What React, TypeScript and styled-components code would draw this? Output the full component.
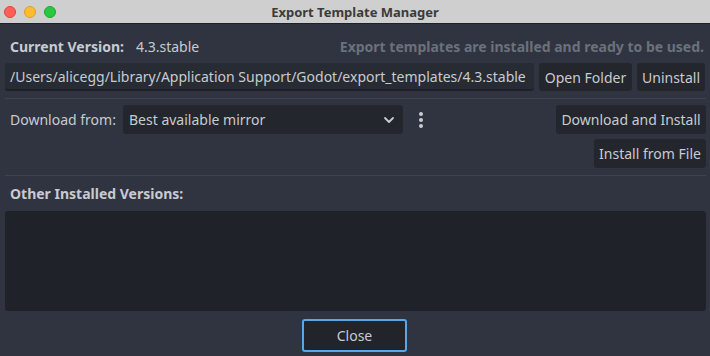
import React from "react";
import styled, { createGlobalStyle } from "styled-components";

const Global = createGlobalStyle`
  html, body { margin: 0; padding: 0; background: #2f3440; }
  body { font-family: "Noto Sans", "Open Sans", sans-serif; font-size: 14px; color: #c8cbd1; }
  * { box-sizing: border-box; }
`;

const Window = styled.div`
  width: 710px;
  height: 356px;
  display: flex;
  flex-direction: column;
  background: #2f3440;
  overflow: hidden;
`;

const TitleBar = styled.div`
  height: 24px;
  flex: none;
  background: #cfcfcf;
  border-bottom: 1px solid #1e2127;
  display: flex;
  align-items: center;
  position: relative;
  padding-left: 4px;
`;

const Lights = styled.div`
  display: flex;
  gap: 8px;
`;

const Light = styled.span<{ $c: string; $b: string }>`
  width: 12px;
  height: 12px;
  border-radius: 50%;
  background: ${(p) => p.$c};
  border: 0.5px solid ${(p) => p.$b};
`;

const Title = styled.div`
  position: absolute;
  left: 0;
  right: 0;
  top: 0;
  bottom: 0;
  display: flex;
  align-items: center;
  justify-content: center;
  font-weight: 700;
  font-size: 13px;
  color: #3b3b3b;
  pointer-events: none;
`;

const Body = styled.div`
  flex: 1;
  display: flex;
  flex-direction: column;
  padding: 10px 4px 4px 5px;
`;

const Row = styled.div`
  display: flex;
  align-items: center;
`;

const InfoRow = styled(Row)`
  height: 24px;
  padding: 0 2px 0 5px;
`;

const Bold = styled.span`
  font-weight: 700;
  color: #c8cbd1;
`;

const Value = styled.span`
  margin-left: 12px;
  color: #c8cbd1;
`;

const Status = styled.span`
  margin-left: auto;
  font-weight: 700;
  color: #6b717c;
`;

const PathRow = styled(Row)`
  margin-top: 5px;
  gap: 5px;
  height: 28px;
`;

const PathField = styled.div`
  width: 529px;
  height: 28px;
  background: #272b33;
  border-bottom: 2px solid #1d2026;
  border-radius: 3px;
  display: flex;
  align-items: center;
  padding-left: 5px;
  white-space: nowrap;
  overflow: hidden;
  color: #c8cbd1;
`;

const Button = styled.div<{ $w: number }>`
  width: ${(p) => p.$w}px;
  height: 28px;
  flex: none;
  background: #23262d;
  border-radius: 3px;
  display: flex;
  align-items: center;
  justify-content: center;
  color: #c8cbd1;
  white-space: nowrap;
`;

const Separator = styled.div`
  height: 1px;
  background: #3d4350;
  margin: 7px 0 6px;
`;

const DownloadRow = styled.div`
  display: flex;
  align-items: flex-start;
`;

const DLLabel = styled.div`
  height: 29px;
  display: flex;
  align-items: center;
  padding-left: 5px;
  width: 118px;
`;

const Select = styled.div`
  width: 280px;
  height: 29px;
  background: #23262d;
  border-radius: 3px;
  display: flex;
  align-items: center;
  padding: 0 8px 0 6px;
  justify-content: space-between;
`;

const Kebab = styled.div`
  width: 36px;
  height: 29px;
  display: flex;
  align-items: center;
  justify-content: center;
`;

const RightCol = styled.div`
  margin-left: auto;
  display: flex;
  flex-direction: column;
  align-items: flex-end;
  gap: 5px;
`;

const TallButton = styled(Button)`
  height: 29px;
`;

const SectionLabel = styled.div`
  height: 22px;
  display: flex;
  align-items: center;
  padding-left: 5px;
`;

const List = styled.div`
  margin-top: 7px;
  width: 701px;
  height: 100px;
  background: #1f2229;
  border-radius: 3px;
`;

const Footer = styled.div`
  display: flex;
  justify-content: center;
  margin-top: 8px;
`;

const CloseButton = styled.div`
  width: 105px;
  height: 33px;
  border: 2px solid #5aa7e8;
  border-radius: 3px;
  background: #21242b;
  display: flex;
  align-items: center;
  justify-content: center;
  color: #c8cbd1;
  margin-left: -2px;
`;

export default function App() {
  return (
    <>
      <Global />
      <Window>
        <TitleBar>
          <Lights>
            <Light $c="#fe5f57" $b="#e0443e" />
            <Light $c="#febc2e" $b="#dea123" />
            <Light $c="#28c840" $b="#1aab29" />
          </Lights>
          <Title>Export Template Manager</Title>
        </TitleBar>
        <Body>
          <InfoRow>
            <Bold>Current Version:</Bold>
            <Value>4.3.stable</Value>
            <Status>Export templates are installed and ready to be used.</Status>
          </InfoRow>
          <PathRow>
            <PathField>/Users/alicegg/Library/Application Support/Godot/export_templates/4.3.stable</PathField>
            <Button $w={93}>Open Folder</Button>
            <Button $w={68}>Uninstall</Button>
          </PathRow>
          <Separator />
          <DownloadRow>
            <DLLabel>Download from:</DLLabel>
            <Select>
              <span>Best available mirror</span>
              <svg width="12" height="8" viewBox="0 0 12 8">
                <path d="M2 2l4 4 4-4" fill="none" stroke="#c8cbd1" strokeWidth="1.8" strokeLinecap="round" strokeLinejoin="round" />
              </svg>
            </Select>
            <Kebab>
              <svg width="6" height="18" viewBox="0 0 6 18">
                <circle cx="3" cy="3" r="2" fill="#c8cbd1" />
                <circle cx="3" cy="9" r="2" fill="#c8cbd1" />
                <circle cx="3" cy="15" r="2" fill="#c8cbd1" />
              </svg>
            </Kebab>
            <RightCol>
              <TallButton $w={150}>Download and Install</TallButton>
              <TallButton $w={112}>Install from File</TallButton>
            </RightCol>
          </DownloadRow>
          <Separator />
          <SectionLabel>
            <Bold>Other Installed Versions:</Bold>
          </SectionLabel>
          <List />
          <Footer>
            <CloseButton>Close</CloseButton>
          </Footer>
        </Body>
      </Window>
    </>
  );
}
